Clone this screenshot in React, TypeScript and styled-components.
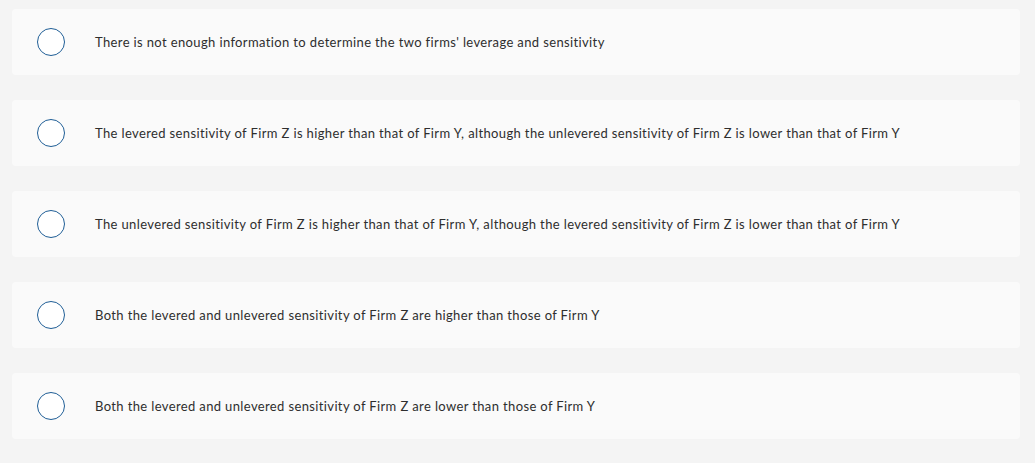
import React from "react";
import styled, { createGlobalStyle } from "styled-components";

const Global = createGlobalStyle`
  html, body { margin: 0; padding: 0; background: #f4f4f4; }
  body { font-family: Lato, "Open Sans", sans-serif; }
`;

const List = styled.div`
  display: flex;
  flex-direction: column;
  gap: 25px;
  padding: 9px 15px 0 12px;
`;

const Option = styled.label`
  display: flex;
  align-items: center;
  height: 66px;
  box-sizing: border-box;
  padding-left: 25px;
  background: #fafafa;
  border-radius: 4px;
  cursor: pointer;
`;

const Radio = styled.span`
  flex: none;
  width: 28px;
  height: 28px;
  box-sizing: border-box;
  border: 1.6px solid #1f5e96;
  border-radius: 50%;
  background: #fff;
  margin-right: 30px;
`;

const Text = styled.span`
  font-size: 13px;
  color: #2e2e2e;
  letter-spacing: 0.37px;
`;

const options = [
  "There is not enough information to determine the two firms' leverage and sensitivity",
  "The levered sensitivity of Firm Z is higher than that of Firm Y, although the unlevered sensitivity of Firm Z is lower than that of Firm Y",
  "The unlevered sensitivity of Firm Z is higher than that of Firm Y, although the levered sensitivity of Firm Z is lower than that of Firm Y",
  "Both the levered and unlevered sensitivity of Firm Z are higher than those of Firm Y",
  "Both the levered and unlevered sensitivity of Firm Z are lower than those of Firm Y",
];

export default function App() {
  return (
    <>
      <Global />
      <List>
        {options.map((o) => (
          <Option key={o}>
            <Radio />
            <Text>{o}</Text>
          </Option>
        ))}
      </List>
    </>
  );
}
